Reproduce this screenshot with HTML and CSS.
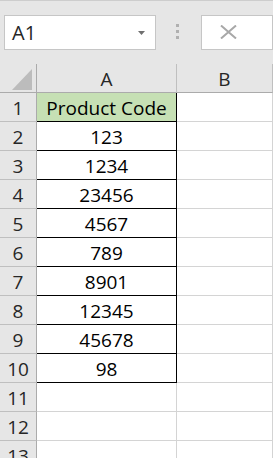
FILE: index.html
```html
<!DOCTYPE html>
<html>
<head>
<meta charset="utf-8">
<link rel="stylesheet" href="styles.css">
</head>
<body>
<div class="app">
  <div class="toolbar">
    <div class="namebox">
      <span class="ref">A1</span>
      <svg class="caret" width="7" height="4" viewBox="0 0 7 4"><path d="M0 0H7L3.5 4Z" fill="#6f6f6f"/></svg>
    </div>
    <div class="dots"><i></i><i></i><i></i></div>
    <div class="formula">
      <svg class="xicon" width="17" height="14" viewBox="0 0 17 14"><path d="M1 0.5L16 13.5M16 0.5L1 13.5" stroke="#a8a8a8" stroke-width="2" fill="none"/></svg>
    </div>
  </div>
  <div class="grid">
    <div class="corner"><svg width="21" height="22" viewBox="0 0 21 22"><path d="M0 21H20V0Z" fill="#bcbcbc"/></svg></div>
    <div class="colh">A</div>
    <div class="colh">B</div>

    <div class="rowh">1</div><div class="cell t head">Product Code</div><div class="cell">&nbsp;</div>
    <div class="rowh">2</div><div class="cell t">123</div><div class="cell"></div>
    <div class="rowh">3</div><div class="cell t">1234</div><div class="cell"></div>
    <div class="rowh">4</div><div class="cell t">23456</div><div class="cell"></div>
    <div class="rowh">5</div><div class="cell t">4567</div><div class="cell"></div>
    <div class="rowh">6</div><div class="cell t">789</div><div class="cell"></div>
    <div class="rowh">7</div><div class="cell t">8901</div><div class="cell"></div>
    <div class="rowh">8</div><div class="cell t">12345</div><div class="cell"></div>
    <div class="rowh">9</div><div class="cell t">45678</div><div class="cell"></div>
    <div class="rowh">10</div><div class="cell t">98</div><div class="cell"></div>
    <div class="rowh">11</div><div class="cell"></div><div class="cell"></div>
    <div class="rowh">12</div><div class="cell"></div><div class="cell"></div>
    <div class="rowh">13</div><div class="cell"></div><div class="cell"></div>
  </div>
</div>
</body>
</html>
```
FILE: styles.css
```css
html, body {
  margin: 0;
  padding: 0;
  background: #e6e6e6;
}
.app {
  width: 273px;
  height: 458px;
  overflow: hidden;
  background: #e6e6e6;
  font-family: "Open Sans", "Liberation Sans", sans-serif;
}
.toolbar {
  height: 64px;
  box-sizing: border-box;
  border-top: 1px solid #cdcdcd;
  padding-top: 14px;
  padding-left: 4px;
  display: flex;
  align-items: flex-start;
}
.namebox {
  width: 152px;
  height: 35px;
  box-sizing: border-box;
  border: 1px solid #c6c6c6;
  background: #fff;
  display: flex;
  align-items: center;
  padding-left: 7px;
  padding-right: 10px;
}
.ref {
  flex: 1;
  font-size: 20px;
  color: #262626;
  line-height: 1;
  padding-top: 1px;
}
.caret {
  display: block;
}
.dots {
  width: 3px;
  margin-left: 20px;
  margin-top: 9px;
  display: flex;
  flex-direction: column;
  gap: 3px;
}
.dots i {
  display: block;
  width: 3px;
  height: 3px;
  background: #b0b0b0;
}
.formula {
  margin-left: 22px;
  width: 72px;
  height: 35px;
  box-sizing: border-box;
  border: 1px solid #c6c6c6;
  background: #fff;
  padding-left: 18px;
  padding-top: 9px;
}
.xicon {
  display: block;
}
.grid {
  display: grid;
  grid-template-columns: 37px 140px 96px;
  grid-auto-rows: 29px;
}
.grid > div {
  box-sizing: border-box;
  display: flex;
  align-items: center;
  justify-content: center;
  font-size: 19px;
  line-height: 1;
  padding-top: 3px;
}
.corner {
  background: #e6e6e6;
  border-right: 1px solid #ababab;
  border-bottom: 1px solid #ababab;
  align-items: flex-end !important;
  justify-content: flex-end !important;
  padding: 0 3px 1px 0 !important;
}
.corner svg {
  display: block;
}
.colh {
  background: #e6e6e6;
  border-right: 1px solid #bfbfbf;
  border-bottom: 1px solid #ababab;
  color: #262626;
}
.rowh {
  background: #e6e6e6;
  border-right: 1px solid #ababab;
  border-bottom: 1px solid #bfbfbf;
  color: #262626;
}
.cell {
  background: #fff;
  border-right: 1px solid #d4d4d4;
  border-bottom: 1px solid #d4d4d4;
  color: #000;
}
.cell.t {
  border-right: 1px solid #000;
  border-bottom: 1px solid #000;
}
.cell.head {
  background: #c6e0b4;
}
```
